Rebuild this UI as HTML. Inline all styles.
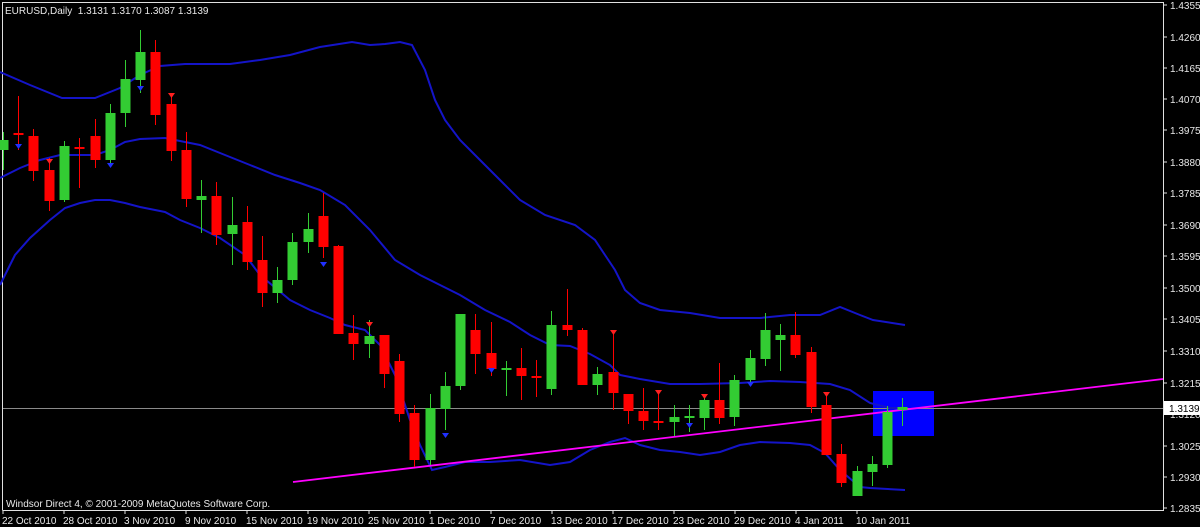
<!DOCTYPE html>
<html><head><meta charset="utf-8"><style>
html,body{margin:0;padding:0;background:#000;width:1200px;height:527px;overflow:hidden}
svg{display:block}
text{font-family:"Liberation Sans",sans-serif;font-size:10px;fill:#e8e8e8}
</style></head><body>
<svg width="1200" height="527" viewBox="0 0 1200 527">
<rect width="1200" height="527" fill="#000"/>
<path d="M2.5 510.5V2.5H1163.5V510.5H2.5" fill="none" stroke="#e0e0e0" stroke-width="1"/>
<g stroke="#e0e0e0">
<line x1="1163" y1="5" x2="1167" y2="5"/><line x1="1163" y1="37" x2="1167" y2="37"/><line x1="1163" y1="68" x2="1167" y2="68"/><line x1="1163" y1="99" x2="1167" y2="99"/><line x1="1163" y1="130" x2="1167" y2="130"/><line x1="1163" y1="162" x2="1167" y2="162"/><line x1="1163" y1="193" x2="1167" y2="193"/><line x1="1163" y1="225" x2="1167" y2="225"/><line x1="1163" y1="256" x2="1167" y2="256"/><line x1="1163" y1="288" x2="1167" y2="288"/><line x1="1163" y1="319" x2="1167" y2="319"/><line x1="1163" y1="351" x2="1167" y2="351"/><line x1="1163" y1="383" x2="1167" y2="383"/><line x1="1163" y1="414" x2="1167" y2="414"/><line x1="1163" y1="446" x2="1167" y2="446"/><line x1="1163" y1="477" x2="1167" y2="477"/><line x1="1163" y1="508" x2="1167" y2="508"/>
</g>
<g>
<text x="1170" y="9">1.4355</text><text x="1170" y="41">1.4260</text><text x="1170" y="72">1.4165</text><text x="1170" y="103">1.4070</text><text x="1170" y="134">1.3975</text><text x="1170" y="166">1.3880</text><text x="1170" y="197">1.3785</text><text x="1170" y="229">1.3690</text><text x="1170" y="260">1.3595</text><text x="1170" y="292">1.3500</text><text x="1170" y="323">1.3405</text><text x="1170" y="355">1.3310</text><text x="1170" y="387">1.3215</text><text x="1170" y="418">1.3120</text><text x="1170" y="450">1.3025</text><text x="1170" y="481">1.2930</text><text x="1170" y="512">1.2835</text>
</g>
<g stroke="#e0e0e0">
<line x1="3" y1="510" x2="3" y2="514"/><line x1="64" y1="510" x2="64" y2="514"/><line x1="125" y1="510" x2="125" y2="514"/><line x1="186" y1="510" x2="186" y2="514"/><line x1="247" y1="510" x2="247" y2="514"/><line x1="308" y1="510" x2="308" y2="514"/><line x1="369" y1="510" x2="369" y2="514"/><line x1="430" y1="510" x2="430" y2="514"/><line x1="491" y1="510" x2="491" y2="514"/><line x1="552" y1="510" x2="552" y2="514"/><line x1="613" y1="510" x2="613" y2="514"/><line x1="674" y1="510" x2="674" y2="514"/><line x1="735" y1="510" x2="735" y2="514"/><line x1="796" y1="510" x2="796" y2="514"/><line x1="857" y1="510" x2="857" y2="514"/>
</g>
<g>
<text x="2" y="524">22 Oct 2010</text><text x="63" y="524">28 Oct 2010</text><text x="124" y="524">3 Nov 2010</text><text x="185" y="524">9 Nov 2010</text><text x="246" y="524">15 Nov 2010</text><text x="307" y="524">19 Nov 2010</text><text x="368" y="524">25 Nov 2010</text><text x="429" y="524">1 Dec 2010</text><text x="490" y="524">7 Dec 2010</text><text x="551" y="524">13 Dec 2010</text><text x="612" y="524">17 Dec 2010</text><text x="673" y="524">23 Dec 2010</text><text x="734" y="524">29 Dec 2010</text><text x="795" y="524">4 Jan 2011</text><text x="856" y="524">10 Jan 2011</text>
</g>
<text x="5" y="14">EURUSD,Daily&#160; 1.3131 1.3170 1.3087 1.3139</text>
<text x="6" y="507">Windsor Direct 4, © 2001-2009 MetaQuotes Software Corp.</text>
<rect x="873" y="391" width="61" height="45" fill="#0000ff"/>
<line x1="3" y1="408.5" x2="1163" y2="408.5" stroke="#8a8a8a" stroke-width="1"/>
<rect x="1164" y="401" width="36" height="14" fill="#fff"/>
<text x="1169" y="412" style="fill:#000">1.3139</text>
<g fill="none" stroke="#1414c8" stroke-width="2">
<polyline points="0,72 30,85 62,98 95,98 120,88 140,75 160,66 185,64 230,64 260,60 290,55 320,47 352,42 370,45 385,44 400,42 412,45 425,70 435,100 445,120 460,140 480,160 500,180 520,200 545,215 575,225 595,240 605,255 615,270 625,290 640,303 660,310 690,313 720,318 760,318 790,315 820,315 840,307 860,315 873,320 905,325"/>
<polyline points="0,178 20,168 40,160 60,155 80,155 95,155 110,150 125,142 140,139 165,138 180,141 200,145 225,155 250,165 275,175 300,183 320,190 345,205 370,230 395,260 420,275 440,285 460,295 485,310 510,322 530,335 550,345 570,346 590,354 610,365 620,375 640,379 670,384 700,384 740,383 770,381 800,382 830,384 850,390 870,403 890,408 905,408"/>
<polyline points="0,285 15,255 30,238 50,220 65,208 80,203 95,200 110,200 125,203 140,207 165,212 180,220 200,228 220,238 245,255 260,275 290,300 310,310 330,318 345,325 365,330 380,345 395,375 410,420 420,445 432,470 445,467 465,462 490,462 520,460 550,465 570,462 590,450 610,442 625,438 640,445 660,450 680,452 700,455 720,452 740,445 760,442 790,443 810,445 825,453 840,470 860,487 870,488 905,490"/>
</g>
<line x1="293" y1="482" x2="1163" y2="379" stroke="#ff00ff" stroke-width="1.8"/>
<g id="c"></g>
</svg>
<script>
var d=[
[3,'g',140,150,132,170],[18,'r',133,135,96,150],[33,'r',136,171,129,181],[49,'r',170,201,158,211],[64,'g',146,200,141,202],[79,'r',147,149,138,188],[95,'r',136,160,119,168],[110,'g',113,160,104,164],[125,'g',79,113,60,127],[140,'g',52,80,30,93],[155,'r',52,115,40,125],[171,'r',104,151,94,161],[186,'r',150,199,132,207],[201,'g',196,200,180,233],[216,'r',196,235,182,245],[232,'g',225,234,197,265],[247,'r',222,262,206,270],[262,'r',260,293,236,307],[277,'g',280,293,267,303],[292,'g',242,280,233,285],[308,'g',229,242,213,253],[323,'r',216,247,193,258],[338,'r',246,334,245,334],[353,'r',333,344,315,360],[369,'g',336,344,320,358],[384,'r',335,374,335,388],[399,'r',361,414,354,422],[414,'r',413,460,405,467],[430,'g',408,460,394,465],[445,'g',386,409,372,430],[460,'g',314,386,314,390],[475,'r',330,354,314,374],[491,'r',353,369,322,376],[506,'g',368,369,361,396],[521,'r',368,376,348,400],[536,'r',376,378,360,397],[551,'g',325,389,311,395],[567,'r',325,330,289,336],[582,'r',330,385,328,385],[597,'g',374,385,367,395],[613,'r',372,393,331,410],[628,'r',394,411,394,424],[643,'r',411,421,388,430],[658,'r',421,422,390,430],[674,'g',417,422,405,436],[689,'g',416,417,405,432],[704,'g',400,418,398,430],[719,'r',400,418,363,424],[734,'g',380,417,375,426],[750,'g',358,380,350,384],[765,'g',330,359,313,366],[780,'g',335,340,324,371],[795,'r',335,355,312,358],[811,'r',352,407,347,413],[826,'r',405,455,395,455],[841,'r',454,483,444,487],[857,'g',471,496,466,496],[872,'g',464,472,456,486],[887,'g',412,465,406,468],[902,'g',407,410,398,426]];
var s='';
d.forEach(function(c){var col=c[1]=='g'?'#33cc33':'#ff0000';var h=Math.max(c[3]-c[2],2);
s+='<line x1="'+(c[0]+.5)+'" y1="'+c[4]+'" x2="'+(c[0]+.5)+'" y2="'+c[5]+'" stroke="'+col+'" stroke-width="1"/>';
s+='<rect x="'+(c[0]-4.5)+'" y="'+c[2]+'" width="10" height="'+h+'" fill="'+col+'"/>';});
var ar=[[18,146,'#2030ff'],[110,165,'#2030ff'],[140,88,'#2030ff'],[323,264,'#2030ff'],[445,435,'#2030ff'],[491,370,'#2030ff'],[689,425,'#2030ff'],[750,384,'#2030ff'],[49,161,'#ff2020'],[171,95,'#ff2020'],[369,324,'#ff2020'],[613,332,'#ff2020'],[658,392,'#ff2020'],[704,396,'#ff2020'],[826,394,'#ff2020']];
ar.forEach(function(a){s+='<path d="M'+(a[0]-3)+' '+(a[1]-2)+'L'+(a[0]+4)+' '+(a[1]-2)+'L'+(a[0]+.5)+' '+(a[1]+3)+'Z" fill="'+a[2]+'"/>';});
document.getElementById('c').innerHTML=s;
</script>
</body></html>
